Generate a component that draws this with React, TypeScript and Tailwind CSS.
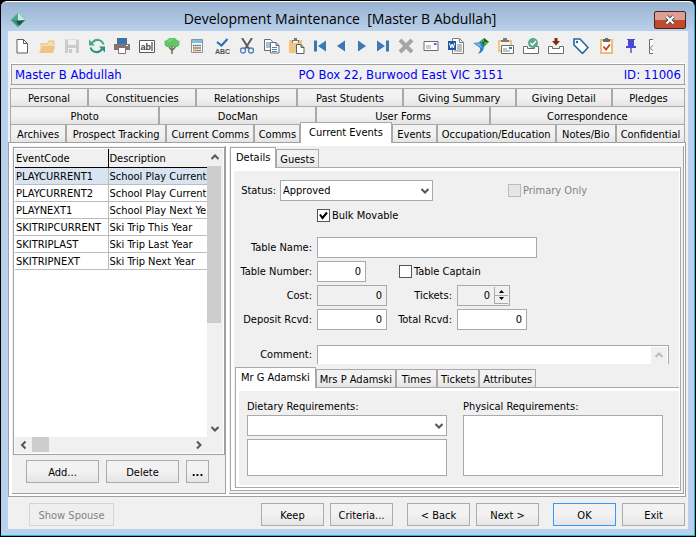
import { ReactNode, useState } from "react";
import clsx from "clsx";

type Event = { code: string; description: string };

const events: Event[] = [
  { code: "PLAYCURRENT1", description: "School Play Current" },
  { code: "PLAYCURRENT2", description: "School Play Current" },
  { code: "PLAYNEXT1", description: "School Play Next Ye" },
  { code: "SKITRIPCURRENT", description: "Ski Trip This Year" },
  { code: "SKITRIPLAST", description: "Ski Trip Last Year" },
  { code: "SKITRIPNEXT", description: "Ski Trip Next Year" },
];

const tabRows = [
  {
    cols: "grid-cols-[78fr_108fr_101fr_105fr_113fr_96fr_73fr]",
    tabs: ["Personal", "Constituencies", "Relationships", "Past Students", "Giving Summary", "Giving Detail", "Pledges"],
  },
  {
    cols: "grid-cols-[149fr_157fr_173fr_195fr]",
    tabs: ["Photo", "DocMan", "User Forms", "Correspondence"],
  },
  {
    cols: "grid-cols-[56fr_100fr_88fr_46fr_91fr_45fr_119fr_60fr_69fr]",
    tabs: ["Archives", "Prospect Tracking", "Current Comms", "Comms", "Current Events", "Events", "Occupation/Education", "Notes/Bio", "Confidential"],
  },
];

function Icon({ children }: { children: ReactNode }) {
  return (
    <svg width="16" height="16" viewBox="0 0 16 16" fill="none" className="shrink-0">
      {children}
    </svg>
  );
}

const boxTray = <path d="M.5 8.500h4v2h7v-2h4v7H.5z" fill="#fff" stroke="#6b6b6b" />;

const fileTools: { label: string; icon: ReactNode }[] = [
  {
    label: "New",
    icon: <path d="M3 1.500h6.500l4 4v9.500H3zM9.500 1.500v4h4" fill="#fff" stroke="#5e5e5e" />,
  },
  {
    label: "Open",
    icon: (
      <>
        <path d="M1 14V6h7l2-3h5v5z" fill="#f3ddb4" />
        <path d="M1 6h7l2-3h5v4" stroke="#e9bd7d" />
        <path d="M0 15l3.500-7H16l-2 7z" fill="#f0c582" />
      </>
    ),
  },
  {
    label: "Save",
    icon: (
      <>
        <path d="M1 1.500h13l1 1V15H1z" fill="#cbcbcb" />
        <path d="M4 2h8v5H4zM4 10h8v5H4z" fill="#efefef" />
        <path d="M5 11h3v4H5z" fill="#cbcbcb" />
      </>
    ),
  },
  {
    label: "Refresh",
    icon: (
      <>
        <path d="M2.500 6C4 3 6.500 1.700 9 1.900s4.500 1.300 5.500 4.600" stroke="#47a68e" strokeWidth="2" />
        <path d="M13.500 10C12 13 9.500 14.300 7 14.100S2.500 12.500 1.500 9.500" stroke="#2f8f80" strokeWidth="2" />
        <path d="M0 1.500v6h6z" fill="#47a68e" />
        <path d="M16 14.500v-6h-6z" fill="#2f8f80" />
      </>
    ),
  },
  {
    label: "Print",
    icon: (
      <>
        <path d="M3 0h10v6H3z" fill="#666" />
        <path d="M4 1h8v5H4z" fill="#2e78c0" />
        <path d="M0 6h16v6H0z" fill="#857370" />
        <path d="M4.500 9.500h7v6h-7z" fill="#fff" stroke="#857370" />
        <path d="M12 7h2v1h-2z" fill="#fff" />
      </>
    ),
  },
  {
    label: "Edit text",
    icon: (
      <>
        <path d="M.5 2.500h15v12H.5z" fill="#fff" stroke="#5a5a5a" />
        <text x="1.500" y="12" fontSize="9" fontFamily="Liberation Sans, sans-serif" fontWeight="bold" fill="#444">ab</text>
        <path d="M13 4v9" stroke="#222" />
      </>
    ),
  },
  {
    label: "Tree",
    icon: (
      <>
        <path d="M5 0h6l2 2 2.500 1v4l-2 2H2.500L.5 7V3L3 2z" fill="#63c466" />
        <path d="M5 1h4L6 4H3z" fill="#7bd179" />
        <path d="M8 8v8M8 12.500l3.500-3.500M8 12.500L5 9" stroke="#7b6a55" strokeWidth="1.500" />
      </>
    ),
  },
  {
    label: "Calculator",
    icon: (
      <>
        <path d="M2.500 1.500h11v13h-11z" fill="#fff" stroke="#909090" />
        <path d="M3 2h10v3H3z" fill="#78bfe8" />
        <path d="M4 7.500h8M4 10h8M4 12.500h8" stroke="#555" strokeWidth="1.500" strokeDasharray="1.500 .6" />
        <path d="M4 10h2M4 12.500h4" stroke="#e39a43" strokeWidth="1.500" />
      </>
    ),
  },
  {
    label: "Spelling",
    icon: (
      <>
        <path d="M3 4l4.500 3.500L13.500 1" stroke="#2e6fb7" strokeWidth="2.200" />
        <text x="1" y="16" fontSize="7" fontFamily="Liberation Sans, sans-serif" fontWeight="bold" fill="#555">ABC</text>
      </>
    ),
  },
  {
    label: "Cut",
    icon: (
      <>
        <path d="M3 0l7 11M13 0L6 11" stroke="#5d5d5d" strokeWidth="2" />
        <circle cx="4" cy="12.500" r="2.500" stroke="#4b82bd" strokeWidth="1.300" />
        <circle cx="12" cy="12.500" r="2.500" stroke="#4b82bd" strokeWidth="1.300" />
      </>
    ),
  },
  {
    label: "Copy",
    icon: (
      <>
        <path d="M.5 1.500h6l2 2v9h-8z" fill="#fff" stroke="#6b6b6b" />
        <path d="M2 5h4M2 7h4M2 9h4" stroke="#4b82bd" />
        <path d="M6.500 4.500h5.500l3 3v7.500H6.500zM12 4.500v3h3" fill="#fff" stroke="#6b6b6b" />
        <path d="M8 9.500h5M8 11.500h5M8 13.500h5" stroke="#4b82bd" />
      </>
    ),
  },
  {
    label: "Paste",
    icon: (
      <>
        <path d="M0 2h13v13H0z" fill="#f0c582" />
        <path d="M3 2h2V0h3v2h2v3H3z" fill="#777" />
        <path d="M4 3h5v2H4z" fill="#f4f1e9" />
        <path d="M7.500 6.500h4.500l3 3v6H7.500zM12 6.500v3h3" fill="#fff" stroke="#5e5e5e" />
      </>
    ),
  },
];

const mailTools: { label: string; icon: ReactNode }[] = [
  {
    label: "Remove",
    icon: <path d="M2 2l12 12M14 2L2 14" stroke="#a5a5a5" strokeWidth="4" />,
  },
  {
    label: "Envelope",
    icon: (
      <>
        <path d="M1 3.500h14v9H1z" fill="#fff" stroke="#6b6b6b" />
        <path d="M3 8h5M3 10h5" stroke="#9a9a9a" />
        <path d="M11 5h2.500v2H11z" fill="#3b6fc4" />
      </>
    ),
  },
  {
    label: "Word",
    icon: (
      <>
        <path d="M4.500.5h7l4 4v11h-11zM11.500.5v4h4" fill="#fff" stroke="#7d7d7d" />
        <path d="M9 7h5M9 9h5M9 11h5M6 13h8" stroke="#7d7d7d" />
        <path d="M0 3h8v9H0z" fill="#1d5aa6" />
        <path d="M1.500 5l1.300 5L4 6l1.300 4L6.500 5" stroke="#fff" />
      </>
    ),
  },
  {
    label: "Send",
    icon: (
      <>
        <path d="M6 4l5-4 5 4-5 5z" fill="#43a944" />
        <path d="M11 0l5 4h-5zM11 4v5L7 4z" fill="#235c31" />
        <path d="M0 5l9-1 2 5c-.5 4-3 6-6 7 2-3 3-5 1-7z" fill="#2d83d3" />
        <path d="M0 5l7 .5 2 5C6 7.500 4 6 0 5z" fill="#73bff0" />
      </>
    ),
  },
  {
    label: "Address",
    icon: (
      <>
        <path d="M0 2h14v12H0z" fill="#f0c582" />
        <path d="M2 4h10v8H2z" fill="#f7f3e9" />
        <path d="M3 4V2h2V0h4v2h2v2z" fill="#7a7a7a" />
        <path d="M3.500 7.500h12v8h-12z" fill="#fff" stroke="#6b6b6b" />
        <path d="M5 11h4M5 13h7" stroke="#888" />
        <path d="M11 9h3v2h-3z" fill="#3b6fc4" />
      </>
    ),
  },
  {
    label: "Accept",
    icon: (
      <>
        {boxTray}
        <circle cx="10" cy="5" r="5" fill="#5ba889" />
        <path d="M7.500 5l2 2 3.500-4" stroke="#fff" strokeWidth="1.500" />
      </>
    ),
  },
  {
    label: "Receive",
    icon: (
      <>
        {boxTray}
        <path d="M6.500 0h3v3H12L8 7.500 4 3h2.500z" fill="#7d2c13" />
      </>
    ),
  },
  {
    label: "Tag",
    icon: (
      <>
        <path d="M1 1h6l8 8.500-5.500 6L1 7z" fill="#fff" stroke="#23669f" strokeWidth="1.600" />
        <circle cx="4" cy="4" r="1.200" fill="#23669f" />
      </>
    ),
  },
  {
    label: "Tasks",
    icon: (
      <>
        <path d="M2 1h13v15H2z" fill="#edbd73" />
        <path d="M4 3h9v11H4z" fill="#fff" />
        <path d="M5 1h2V0h3v1h2v3H5z" fill="#6b6b6b" />
        <path d="M5.500 8.500l2.500 3 4-5" stroke="#cc4125" strokeWidth="1.800" />
      </>
    ),
  },
  {
    label: "Pin",
    icon: <path d="M4 1h8v1h-1v6h2v2H8.700v5H7.300v-5H3V8h2V2H4z" fill="#4747d8" />,
  },
];

const navTools: { label: string; icon: ReactNode }[] = [
  { label: "First", icon: <path d="M2 2.500h3v11H2zM14 2.500v11L6 8z" fill="#3f76b5" /> },
  { label: "Previous", icon: <path d="M12 2.500v11L4 8z" fill="#3f76b5" /> },
  { label: "Next", icon: <path d="M4 2.500v11L12 8z" fill="#3f76b5" /> },
  { label: "Last", icon: <path d="M11 2.500h3v11h-3zM2 2.500v11L10 8z" fill="#3f76b5" /> },
];

function Chevron({ dir, faint }: { dir: "up" | "down" | "left" | "right"; faint?: boolean }) {
  const paths = {
    up: "M1.500 6L5 2.500 8.500 6",
    down: "M1.500 3L5 6.500 8.500 3",
    left: "M6.500 1.500L3 5l3.500 3.500",
    right: "M3 1.500L6.500 5 3 8.500",
  };
  return (
    <svg width="10" height="10" viewBox="0 0 10 10" fill="none">
      <path d={paths[dir]} stroke={faint ? "#bdbdbd" : "#555"} strokeWidth="2" />
    </svg>
  );
}

function Button({ children, width = "w-[63px]", disabled, primary }: { children: ReactNode; width?: string; disabled?: boolean; primary?: boolean }) {
  return (
    <button
      disabled={disabled}
      className={clsx(
        "h-[23px] border pt-px",
        width,
        disabled
          ? "border-[#d4d4d4] bg-[#efefef] text-[#838383]"
          : "bg-linear-to-b from-[#f2f2f2] from-50% to-[#e5e5e5]",
        !disabled && (primary ? "border-[#3399ff]" : "border-[#acacac]")
      )}
    >
      {children}
    </button>
  );
}

function SubTabs({ tabs, active, onSelect }: { tabs: string[]; active: string; onSelect: (tab: string) => void }) {
  return (
    <div className="flex items-end" role="tablist">
      {tabs.map((tab) => (
        <button
          key={tab}
          role="tab"
          aria-selected={tab === active}
          onClick={() => onSelect(tab)}
          className={clsx(
            "min-w-[41px] border border-b-0 border-[#a9a9a9] whitespace-nowrap",
            tab === active ? "relative z-10 -mb-px h-[21px] bg-white px-[5px] pb-[2px]" : "h-[18px] bg-linear-to-b from-[#f2f2f2] from-50% to-[#e4e4e4] px-[3px] pt-[2px]"
          )}
        >
          {tab}
        </button>
      ))}
    </div>
  );
}

function Select({ id, options, className }: { id: string; options: string[]; className: string }) {
  return (
    <div className={clsx("relative", className)}>
      <select id={id} className="h-[21px] w-full appearance-none border border-[#a9a9ad] bg-white pl-[2px] outline-none">
        {options.map((option) => (
          <option key={option}>{option}</option>
        ))}
      </select>
      <span className="pointer-events-none absolute top-[6px] right-[3px]">
        <Chevron dir="down" />
      </span>
    </div>
  );
}

function Check({ label, checked, disabled }: { label: string; checked?: boolean; disabled?: boolean }) {
  return (
    <label className={clsx("flex items-center gap-[2px] whitespace-nowrap", disabled && "text-[#838383]")}>
      <span className="relative block size-[13px]">
        <input
          type="checkbox"
          defaultChecked={checked}
          disabled={disabled}
          className="peer block size-[13px] appearance-none border border-[#555] bg-white disabled:border-[#bcbcbc] disabled:bg-[#e6e6e6]"
        />
        <svg viewBox="0 0 13 13" fill="none" className="pointer-events-none absolute inset-0 hidden peer-checked:block">
          <path d="M3 5.500l2.500 3.500L10 3.500" stroke="#000" strokeWidth="2" />
        </svg>
      </span>
      {label}
    </label>
  );
}

function Field({ id, label, labelWidth = "w-[78px]", children }: { id: string; label: string; labelWidth?: string; children: ReactNode }) {
  return (
    <div className="flex items-center gap-[5px]">
      <label htmlFor={id} className={clsx("shrink-0 text-right whitespace-nowrap", labelWidth)}>
        {label}
      </label>
      {children}
    </div>
  );
}

const inputClass = "h-[21px] border border-[#a9a9ad] px-1 outline-none";

function EventList() {
  const [selected, setSelected] = useState("PLAYCURRENT1");

  return (
    <section className="flex w-[214px] shrink-0 flex-col border-r border-b border-[#a0a0a0] bg-[#f0f0f0] pt-px pl-px">
      <div className="flex grow flex-col border border-[#a0a0a8] bg-white p-px">
        <div className="flex grow">
          <div className="w-[192px]">
            <table className="w-full table-fixed border-collapse text-left">
              <thead>
                <tr className="h-[18px] bg-[#f0f0f0]">
                  <th className="w-[93px] border-r border-b border-black px-px pt-px font-normal">EventCode</th>
                  <th className="border-b border-black px-px pt-px font-normal">Description</th>
                </tr>
              </thead>
              <tbody>
                {events.map((event) => (
                  <tr
                    key={event.code}
                    onClick={() => setSelected(event.code)}
                    className={clsx("h-[17px]", event.code === selected && "bg-[#d8e4f1]")}
                  >
                    <td className="border-r border-b border-[#bcbcbc] px-px pt-px whitespace-nowrap">{event.code}</td>
                    <td className="border-b border-[#bcbcbc] pt-px pl-px whitespace-nowrap">{event.description}</td>
                  </tr>
                ))}
              </tbody>
            </table>
          </div>
          <div className="flex grow flex-col bg-[#f0f0f0]">
            <button aria-label="Scroll up" className="flex h-[17px] items-center justify-center">
              <Chevron dir="up" />
            </button>
            <div className="mr-[2px] h-[157px] bg-[#cdcdcd]" />
            <button aria-label="Scroll down" className="mt-auto flex h-[17px] items-center justify-center">
              <Chevron dir="down" />
            </button>
          </div>
        </div>
        <div className="flex h-4 bg-[#f0f0f0] pr-4">
          <button aria-label="Scroll left" className="flex w-[17px] items-center justify-center">
            <Chevron dir="left" />
          </button>
          <div className="h-[15px] w-[17px] bg-[#cdcdcd]" />
          <button aria-label="Scroll right" className="ml-auto flex w-[17px] items-center justify-center">
            <Chevron dir="right" />
          </button>
        </div>
      </div>
      <div className="flex gap-[7px] px-[13px] pt-[5px] pb-[10px]">
        <Button width="w-[73px]">Add...</Button>
        <Button width="w-[73px]">Delete</Button>
        <Button width="w-[23px]">
          <b>...</b>
        </Button>
      </div>
    </section>
  );
}

function GuestPanel() {
  const [tab, setTab] = useState("Mr G Adamski");

  return (
    <div className="pt-[3px] pl-px">
      <SubTabs tabs={["Mr G Adamski", "Mrs P Adamski", "Times", "Tickets", "Attributes"]} active={tab} onSelect={setTab} />
      <div className="border-t border-b border-l border-[#a9a9a9] bg-white pt-[3px] pb-[2px] pl-[3px]">
        <div className="flex items-stretch gap-4 bg-[#f0f0f0] px-2 pt-[9px] pb-[9px]">
          <div className="w-[200px]">
            <label htmlFor="diet" className="mb-[2px] block">Dietary Requirements:</label>
            <Select id="diet" options={[""]} className="mb-[3px] w-full" />
            <textarea aria-label="Dietary notes" className="block h-[37px] w-full resize-none border border-[#a9a9ad] bg-white outline-none" />
          </div>
          <div className="flex w-[200px] flex-col">
            <label htmlFor="physical" className="mb-[2px] block">Physical Requirements:</label>
            <textarea id="physical" className="block grow resize-none border border-[#a9a9ad] bg-white outline-none" />
          </div>
        </div>
      </div>
    </div>
  );
}

function DetailsPanel() {
  const [tab, setTab] = useState("Details");

  return (
    <section className="min-w-0 grow border-r border-b border-[#a0a0a0] bg-[#f0f0f0] pt-px pr-[2px] pb-px pl-px">
      <SubTabs tabs={["Details", "Guests"]} active={tab} onSelect={setTab} />
      <div className="border border-[#a9a9a9] bg-white pt-[3px] pr-px pb-[2px] pl-[3px]">
        <div className="bg-[#f0f0f0] pt-[9px]">
          <div className="flex items-center">
            <label htmlFor="status" className="w-[46px] pr-1 text-right">Status:</label>
            <Select id="status" options={["Approved"]} className="w-[153px]" />
            <div className="ml-[75px]">
              <Check label="Primary Only" disabled />
            </div>
          </div>
          <div className="mt-2 pl-[83px]">
            <Check label="Bulk Movable" checked />
          </div>
          <div className="mt-[15px] flex flex-col gap-[3px]">
            <Field id="tableName" label="Table Name:">
              <input id="tableName" type="text" className={clsx(inputClass, "w-[220px] bg-white")} />
            </Field>
            <div className="flex gap-[33px]">
              <Field id="tableNumber" label="Table Number:">
                <input id="tableNumber" type="text" defaultValue="0" className={clsx(inputClass, "w-[49px] bg-white text-right")} />
              </Field>
              <Check label="Table Captain" />
            </div>
            <div className="flex">
              <Field id="cost" label="Cost:">
                <input id="cost" type="text" readOnly value="0" className={clsx(inputClass, "w-[70px] bg-[#f0f0f0] text-right")} />
              </Field>
              <Field id="tickets" label="Tickets:" labelWidth="w-[65px]">
                <div className="flex h-[21px] w-[53px] border border-[#a9a9ad]">
                  <input id="tickets" type="text" readOnly value="0" className="w-[35px] bg-[#f0f0f0] pr-[3px] text-right outline-none" />
                  <div className="flex grow flex-col p-px">
                    <button aria-label="More tickets" className="flex grow items-center justify-center border-b border-l border-[#a9a9a9]">
                      <svg width="7" height="4"><path d="M1 4l2.500-3L6 4z" /></svg>
                    </button>
                    <button aria-label="Fewer tickets" className="flex grow items-center justify-center border-b border-l border-[#a9a9a9]">
                      <svg width="7" height="4"><path d="M1 0l2.500 3L6 0z" /></svg>
                    </button>
                  </div>
                </div>
              </Field>
            </div>
            <div className="flex">
              <Field id="deposit" label="Deposit Rcvd:">
                <input id="deposit" type="text" defaultValue="0" className={clsx(inputClass, "w-[70px] bg-white text-right")} />
              </Field>
              <Field id="total" label="Total Rcvd:" labelWidth="w-[65px]">
                <input id="total" type="text" defaultValue="0" className={clsx(inputClass, "w-[70px] bg-white text-right")} />
              </Field>
            </div>
          </div>
          <div className="mt-[15px] mr-[10px]">
            <Field id="comment" label="Comment:">
              <div className="flex h-[19px] grow border border-b-0 border-[#a9a9ad] bg-white pt-px pr-px">
                <textarea id="comment" className="min-w-0 grow resize-none outline-none" />
                <button aria-label="Scroll comment up" disabled className="flex w-4 items-center justify-center bg-[#f0f0f0]">
                  <Chevron dir="up" faint />
                </button>
              </div>
            </Field>
          </div>
          <GuestPanel />
        </div>
      </div>
    </section>
  );
}

function ToolButton({ label, width = "w-[25px]", children }: { label: string; width?: string; children: ReactNode }) {
  return (
    <button aria-label={label} title={label} className={clsx("flex shrink-0 items-center justify-center", width)}>
      <Icon>{children}</Icon>
    </button>
  );
}

export default function App() {
  const [page, setPage] = useState("Current Events");

  return (
    <div className="flex min-h-screen flex-col bg-black p-px font-['DejaVu_Sans_Condensed','DejaVu_Sans',sans-serif] text-[11px] leading-[13px] text-black">
      <div className="flex grow flex-col rounded-t-md border-t border-r border-b border-t-white border-r-[#1fb9dc] border-b-[#1fb9dc] bg-[#b9d1ea] pr-[6px] pb-[6px] pl-[7px]">
        <header className="-mr-[6px] -ml-[7px] flex h-[29px] items-center rounded-t-md bg-linear-to-b from-[#98b2d0] to-[#b9d1ea] pt-[6px] pr-2 pl-[9px]">
          <svg width="16" height="16" viewBox="0 0 16 16" className="shrink-0">
            <path d="M8 0l8 8-8 8-8-8z" fill="#8bc5b6" />
            <path d="M8 1v7H1z" fill="#51a38f" />
            <path d="M8 1l7 7H8z" fill="#c7eadf" />
            <path d="M1 8h7v7z" fill="#3b9180" />
            <path d="M6 9l9-1-6 6z" fill="#22534f" />
          </svg>
          <h1 className="grow pb-px text-center font-['Open_Sans','Noto_Sans',sans-serif] text-[14px] leading-5 whitespace-pre">
            Development Maintenance  [Master B Abdullah]
          </h1>
          <button
            aria-label="Close"
            className="flex h-[18px] w-8 items-center justify-center rounded-xs border border-[#4f1f1c] bg-linear-to-b from-[#dca093] from-50% to-[#c04a2c] to-50%"
          >
            <svg width="12" height="10" viewBox="0 0 12 10">
              <path d="M2.500 1.500l7 7M9.500 1.500l-7 7" stroke="#535666" strokeWidth="4" />
              <path d="M2.500 1.500l7 7M9.500 1.500l-7 7" stroke="#fff" strokeWidth="2" />
            </svg>
          </button>
        </header>

        <main className="flex grow flex-col bg-[#f0f0f0]">
          <div className="flex h-8 items-center overflow-hidden pb-[2px] pl-px">
            {fileTools.map((tool) => (
              <ToolButton key={tool.label} label={tool.label}>{tool.icon}</ToolButton>
            ))}
            <div className="flex shrink-0">
              {navTools.map((tool) => (
                <ToolButton key={tool.label} label={tool.label} width="w-[21px]">{tool.icon}</ToolButton>
              ))}
            </div>
            {mailTools.map((tool) => (
              <ToolButton key={tool.label} label={tool.label}>{tool.icon}</ToolButton>
            ))}
            <button aria-label="Search" className="ml-[6px] shrink-0">
              <svg width="4" height="16" viewBox="0 0 4 16" fill="none">
                <path d="M4 1.500H.5v14H4" fill="#fff" stroke="#6b6b6b" />
                <path d="M4 7.500c-3 1-3 4 0 5" stroke="#6b6b6b" />
              </svg>
            </button>
          </div>

          <div className="mr-[2px] ml-[2px] border border-t-white border-r-white border-b-[#a0a0a0] border-l-white">
            <div className="grid h-5 grid-cols-[283fr_322fr_60fr] items-center border-t border-r border-l border-[#a0a0a0] px-[3px] pt-px text-[13px] leading-4 whitespace-nowrap text-[#0000f0]">
              <span>Master B Abdullah</span>
              <span>PO Box 22, Burwood East VIC 3151</span>
              <span className="text-right">ID: 11006</span>
            </div>
          </div>

          <nav className="mt-[3px] pr-[3px] pl-[2px]">
            {tabRows.map((row) => (
              <div key={row.cols} className={clsx("grid h-[18px]", row.cols)}>
                {row.tabs.map((tab) => (
                  <button
                    key={tab}
                    onClick={() => setPage(tab)}
                    className={clsx(
                      "border border-b-0 border-[#a9a9a9] whitespace-nowrap",
                      tab === page
                        ? "relative z-10 -mt-[2px] -mb-px bg-white pb-[2px]"
                        : "bg-linear-to-b from-[#f2f2f2] from-50% to-[#e4e4e4] pt-[2px]"
                    )}
                  >
                    {tab}
                  </button>
                ))}
              </div>
            ))}
          </nav>

          <div className="mr-[2px] flex grow gap-[3px] border border-[#a0a0a0] bg-white pt-[3px] pr-px pb-[2px] pl-[3px]">
            <EventList />
            <DetailsPanel />
          </div>

          <footer className="flex items-center px-[3px] py-[6px] pb-[3px] pl-[21px]">
            <Button width="w-[85px]" disabled>Show Spouse</Button>
            <div className="ml-auto flex gap-[14px]">
              <div className="flex gap-[6px]">
                <Button>Keep</Button>
                <Button>Criteria...</Button>
              </div>
              <div className="flex gap-[6px]">
                <Button>&lt; Back</Button>
                <Button>Next &gt;</Button>
              </div>
              <div className="flex gap-[6px]">
                <Button primary>OK</Button>
                <Button>Exit</Button>
              </div>
            </div>
          </footer>
        </main>
      </div>
    </div>
  );
}
